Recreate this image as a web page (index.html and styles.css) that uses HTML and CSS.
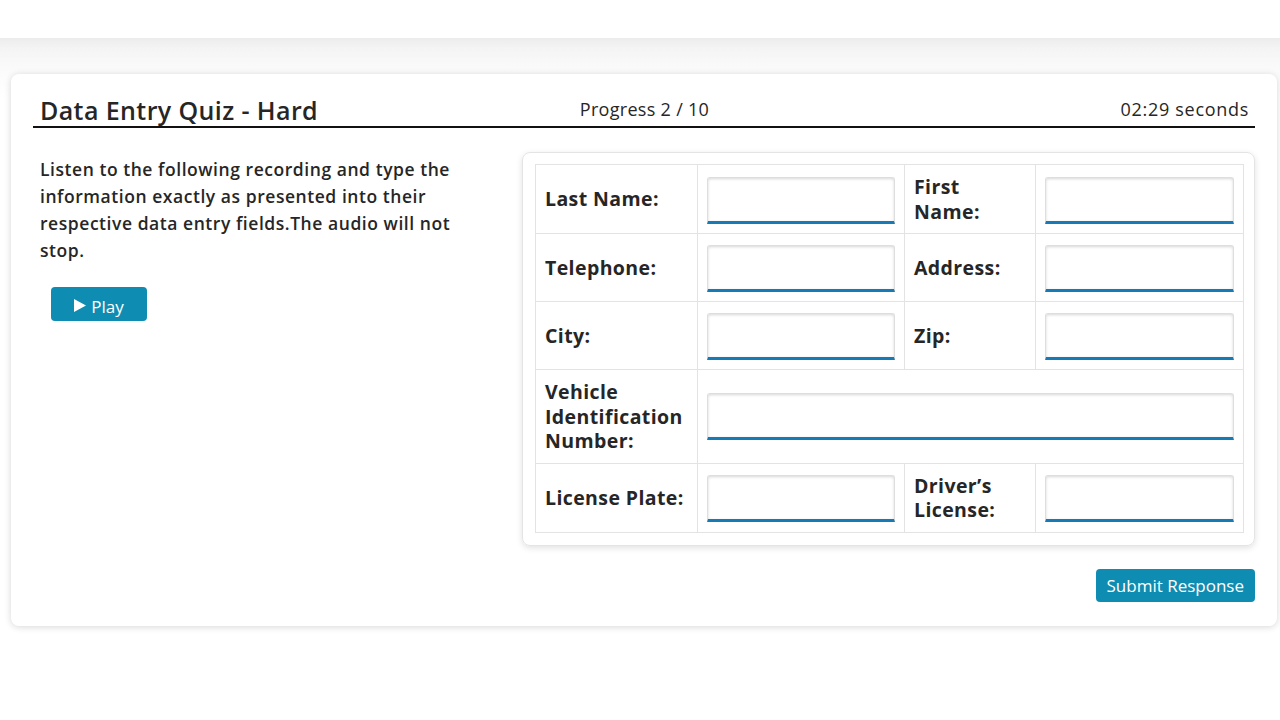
FILE: index.html
```html
<!DOCTYPE html>
<html lang="en">
<head>
<meta charset="utf-8">
<title>Data Entry Quiz - Hard</title>
<link rel="stylesheet" href="styles.css">
</head>
<body>
<div class="top"></div>
<main class="page">
  <section class="card">
    <header class="quiz-head">
      <h1 class="title">Data Entry Quiz - Hard</h1>
      <div class="progress">Progress 2 / 10</div>
      <div class="timer">02:29 seconds</div>
    </header>
    <div class="quiz-body">
      <div class="left">
        <p class="instructions">Listen to the following recording and type the information exactly as presented into their respective data entry fields.The audio will not stop.</p>
        <button class="btn play" type="button"><svg class="play-icon" viewBox="0 0 12 13" width="12" height="13"><path d="M0 0 L12 6.5 L0 13 Z" fill="#fff"/></svg>Play</button>
      </div>
      <div class="right">
        <div class="panel">
          <table class="form">
            <colgroup>
              <col class="c1"><col class="c2"><col class="c3"><col class="c4">
            </colgroup>
            <tr>
              <td class="label">Last Name:</td>
              <td class="field"><input class="inp" type="text"></td>
              <td class="label">First Name:</td>
              <td class="field"><input class="inp" type="text"></td>
            </tr>
            <tr>
              <td class="label">Telephone:</td>
              <td class="field"><input class="inp" type="text"></td>
              <td class="label">Address:</td>
              <td class="field"><input class="inp" type="text"></td>
            </tr>
            <tr>
              <td class="label">City:</td>
              <td class="field"><input class="inp" type="text"></td>
              <td class="label">Zip:</td>
              <td class="field"><input class="inp" type="text"></td>
            </tr>
            <tr>
              <td class="label">Vehicle Identification Number:</td>
              <td class="field" colspan="3"><input class="inp" type="text"></td>
            </tr>
            <tr>
              <td class="label">License Plate:</td>
              <td class="field"><input class="inp" type="text"></td>
              <td class="label">Driver’s License:</td>
              <td class="field"><input class="inp" type="text"></td>
            </tr>
          </table>
        </div>
        <div class="actions">
          <button class="btn submit" type="button">Submit Response</button>
        </div>
      </div>
    </div>
  </section>
</main>
</body>
</html>
```
FILE: styles.css
```css
* { box-sizing: border-box; }
html, body { margin: 0; padding: 0; background: #fff; }
body {
  font-family: "Open Sans", "Liberation Sans", sans-serif;
  color: #222;
  width: 1280px;
  height: 720px;
  overflow: hidden;
}
.top { height: 38px; background: #fff; }
.page {
  padding: 36px 3px 0 11px;
  background: linear-gradient(to bottom, #ececec 0, #f4f4f4 10px, #f9f9f9 26px, #fcfcfc 40px, #fff 60px) no-repeat;
  background-size: 100% 60px;
}
.card {
  background: #fff;
  border-radius: 8px;
  box-shadow: 0 1px 7px rgba(0,0,0,0.16);
  padding: 20px 22px 24px 22px;
}
.quiz-head {
  display: grid;
  grid-template-columns: 1fr auto 1fr;
  align-items: end;
  border-bottom: 2px solid #111;
  padding: 0 6px 0 7px;
  height: 34px;
}
.title {
  margin: 0;
  font-size: 25px;
  font-weight: 600;
  letter-spacing: 0.4px;
  line-height: 32px;
  color: #262626;
  white-space: nowrap;
}
.progress, .timer {
  font-size: 18px;
  letter-spacing: 0.3px;
  line-height: 30px;
  padding-bottom: 2px;
  color: #262626;
}
.timer { text-align: right; letter-spacing: 0.7px; }
.quiz-body {
  display: grid;
  grid-template-columns: 1fr 733px;
  column-gap: 22px;
  padding-top: 24px;
}
.left { padding: 4px 0 0 7px; }
.instructions {
  margin: 0;
  max-width: 428px;
  font-size: 17.5px;
  font-weight: 600;
  letter-spacing: 0.55px;
  line-height: 27px;
  color: #262626;
}
.btn {
  font-family: inherit;
  border: none;
  border-radius: 4px;
  background: #0f8cb1;
  color: #fff;
  cursor: pointer;
}
.play {
  margin: 23px 0 0 11px;
  width: 96px;
  height: 34px;
  font-size: 17px;
  display: flex;
  align-items: center;
  justify-content: center;
  gap: 5px;
  padding: 4px 0 0 0;
}
.play-icon { display: block; margin-top: -2px; }
.panel {
  border: 1px solid #e4e4e4;
  border-radius: 8px;
  box-shadow: 0 2px 6px rgba(0,0,0,0.12);
  padding: 11px 11px 12px 12px;
}
.form {
  width: 708px;
  table-layout: fixed;
  border-collapse: collapse;
}
.c1 { width: 162px; }
.c2 { width: 207px; }
.c3 { width: 131px; }
.c4 { width: 208px; }
.form td {
  border: 1px solid #e3e3e3;
  padding: 10px 9px 9px 9px;
  vertical-align: middle;
}
.label {
  font-size: 19.5px;
  font-weight: 700;
  letter-spacing: 0.4px;
  line-height: 24.5px;
  color: #262626;
}
.form td.field { padding: 11px 9px 9px 9px; }
.inp {
  display: block;
  width: 100%;
  height: 47px;
  border: 1px solid #dedede;
  border-bottom: 3px solid #167ab6;
  border-radius: 3px 3px 0 0;
  box-shadow: inset 0 1px 3px rgba(0,0,0,0.16);
  background: #fff;
  font-family: inherit;
  font-size: 16px;
  padding: 0 8px;
  outline: none;
}
.form td.field:only-child, .form td[colspan] { padding: 10px 9px 9px 9px; }
.actions {
  display: flex;
  justify-content: flex-end;
  padding-top: 23px;
}
.submit {
  height: 33px;
  padding: 1px 11px 0 11px;
  font-size: 17px;
  font-weight: 500;
}
```
